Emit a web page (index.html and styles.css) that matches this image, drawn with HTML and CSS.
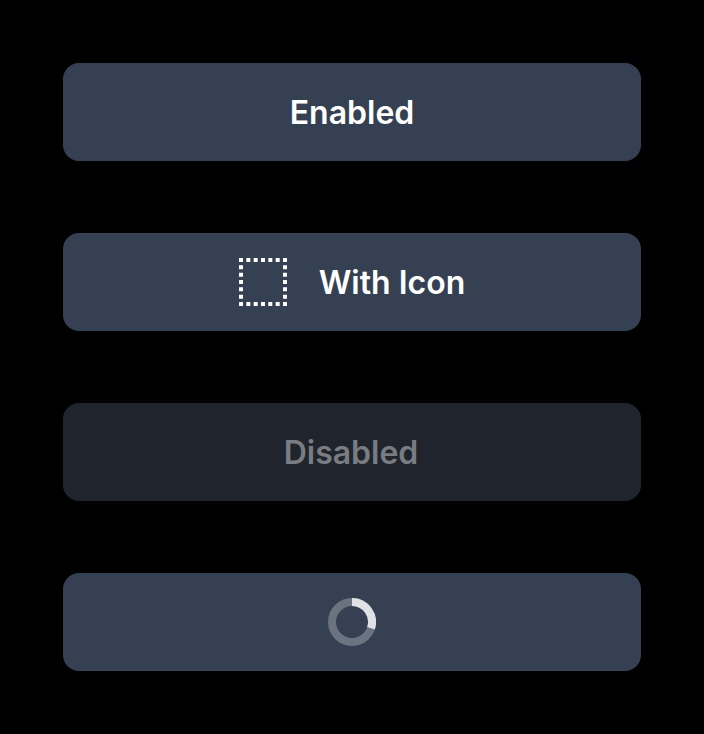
FILE: index.html
```html
<!DOCTYPE html>
<html lang="en">
<head>
<meta charset="utf-8">
<title>Buttons</title>
<link rel="stylesheet" href="styles.css">
</head>
<body>
<main class="stack">
  <button class="button"><span class="label">Enabled</span></button>
  <button class="button">
    <svg class="icon" viewBox="0 0 48 48" aria-hidden="true">
      <path class="dots" d="M0 2H48M0 46H48M2 7.33V44M46 7.33V44"/>
    </svg>
    <span class="label">With Icon</span>
  </button>
  <button class="button button-disabled" disabled><span class="label">Disabled</span></button>
  <button class="button" aria-label="Loading">
    <svg class="icon" viewBox="0 0 48 48" aria-hidden="true">
      <circle class="track" cx="24" cy="24" r="20"/>
      <path class="arc" d="M24 4A20 20 0 0 1 43.02 30.18"/>
    </svg>
  </button>
</main>
</body>
</html>
```
FILE: styles.css
```css
body {
  margin: 0;
  background: #000;
}

.stack {
  display: flex;
  flex-direction: column;
  gap: 72px;
  padding: 63px;
}

.button {
  display: flex;
  align-items: center;
  justify-content: center;
  gap: 32px;
  height: 98px;
  padding: 0;
  border: 0;
  border-radius: 16px;
  background: #354052;
  color: #fff;
  font: 600 32px/48px Inter, sans-serif;
}

.label {
  padding-top: 2px;
}

.button-disabled {
  padding-right: 2px;
  background: #20242d;
  color: #797c81;
}

.icon {
  width: 48px;
  height: 48px;
  fill: none;
  stroke: #fff;
  stroke-width: 4;
}

.dots {
  stroke-dasharray: 4 3.333;
}

.track,
.arc {
  stroke-width: 8;
}

.track {
  stroke: #6b7280;
}

.arc {
  stroke: #e1e2e5;
}
```
